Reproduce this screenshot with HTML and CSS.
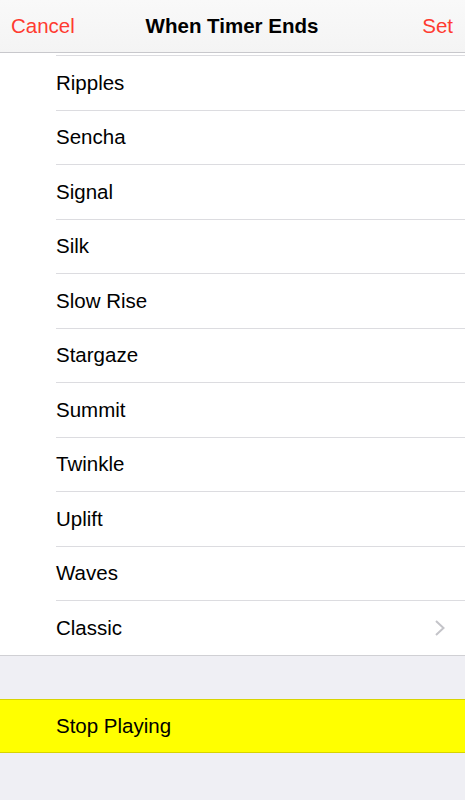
FILE: index.html
```html
<!DOCTYPE html>
<html lang="en">
<head>
    <meta charset="UTF-8">
    <meta name="viewport" content="width=device-width, initial-scale=1.0">
    <title>When Timer Ends</title>
    <link rel="stylesheet" href="styles.css">
</head>
<body>

    <!-- top navigation bar -->
    <div class="nav-bar">
        <span class="nav-button">Cancel</span>
        <span class="nav-title">When Timer Ends</span>
        <span class="nav-button nav-set">Set</span>
    </div>

    <!-- list of sounds, scrolled a little -->
    <div class="sound-list">
        <div class="row"><div class="row-inner">Ripples</div></div>
        <div class="row"><div class="row-inner">Sencha</div></div>
        <div class="row"><div class="row-inner">Signal</div></div>
        <div class="row"><div class="row-inner">Silk</div></div>
        <div class="row"><div class="row-inner">Slow Rise</div></div>
        <div class="row"><div class="row-inner">Stargaze</div></div>
        <div class="row"><div class="row-inner">Summit</div></div>
        <div class="row"><div class="row-inner">Twinkle</div></div>
        <div class="row"><div class="row-inner">Uplift</div></div>
        <div class="row"><div class="row-inner">Waves</div></div>
        <div class="row">
            <div class="row-inner">
                <span>Classic</span>
                <svg class="chevron" width="12" height="18" viewBox="0 0 12 18">
                    <path d="M2 2 L9.5 9 L2 16" fill="none" stroke="#c4c4c9" stroke-width="2"/>
                </svg>
            </div>
        </div>
    </div>

    <div class="group-gap"></div>

    <div class="stop-row">Stop Playing</div>

</body>
</html>
```

FILE: styles.css
```css
body {
    margin: 0;
    background-color: #efeff4;
    font-family: "Liberation Sans", Arial, sans-serif;
    color: #000;
}

.nav-bar {
    display: flex;
    align-items: center;
    justify-content: space-between;
    padding: 0 12px 0 11px;
    background: linear-gradient(#f9f9f9, #f4f4f4);
    border-bottom: 1px solid #c8c8cc;
    box-sizing: border-box;
    height: 53px;
}

.nav-button {
    color: #ff3b30;
    font-size: 20.5px;
    width: 80px;
}

.nav-set {
    text-align: right;
}

.nav-title {
    font-size: 20.5px;
    font-weight: bold;
}

.sound-list {
    background-color: #fff;
    padding-top: 2px;
    border-bottom: 1px solid #d0d0d4;
}

.row {
    padding-left: 56px;
}

.row-inner {
    height: 53.5px;
    border-top: 1px solid #dcdce0;
    display: flex;
    align-items: center;
    justify-content: space-between;
    padding-right: 19px;
    font-size: 20.5px;
}

.chevron {
    display: block;
}

.group-gap {
    height: 43px;
}

.stop-row {
    height: 52px;
    background-color: #ffff00;
    border-top: 1px solid #d8d400;
    border-bottom: 1px solid #d8d400;
    display: flex;
    align-items: center;
    padding-left: 56px;
    font-size: 20.5px;
}
```
